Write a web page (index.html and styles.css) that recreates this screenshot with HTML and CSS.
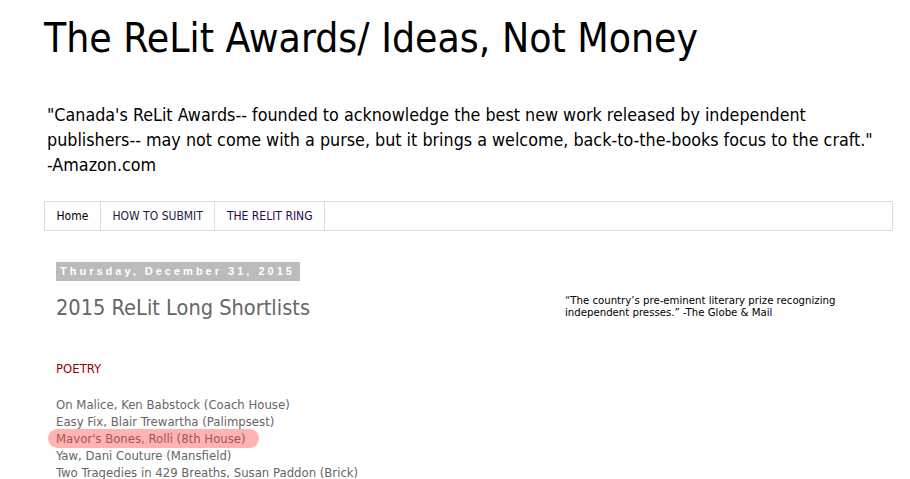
FILE: index.html
```html
<!DOCTYPE html>
<html>
<head>
    <title>The ReLit Awards/ Ideas, Not Money</title>
    <link rel="stylesheet" href="styles.css">
</head>
<body>
    <div class="page">
        <!-- Blog header -->
        <div class="header">
            <h1>The ReLit Awards/ Ideas, Not Money</h1>
            <p class="description">"Canada's ReLit Awards-- founded to acknowledge the best new work released by independent publishers-- may not come with a purse, but it brings a welcome, back-to-the-books focus to the craft."<br>-Amazon.com</p>
        </div>

        <!-- Page tabs -->
        <ul class="tabs">
            <li class="selected"><a href="#">Home</a></li>
            <li><a href="#">HOW TO SUBMIT</a></li>
            <li class="visited"><a href="#">THE RELIT RING</a></li>
        </ul>

        <div class="columns">
            <div class="main">
                <h2 class="date-header"><span>Thursday, December 31, 2015</span></h2>
                <h3 class="post-title">2015 ReLit Long Shortlists</h3>
                <div class="post-body">
                    <p class="category">POETRY</p>
                    <p class="list">
                        On Malice, Ken Babstock (Coach House)<br>
                        Easy Fix, Blair Trewartha (Palimpsest)<br>
                        <span class="marked">Mavor's Bones, Rolli (8th House)</span><br>
                        Yaw, Dani Couture (Mansfield)<br>
                        Two Tragedies in 429 Breaths, Susan Paddon (Brick)
                    </p>
                </div>
            </div>
            <div class="sidebar">
                <p class="blurb">“The country’s pre-eminent literary prize recognizing independent presses.” -The Globe &amp; Mail</p>
            </div>
        </div>
    </div>
</body>
</html>
```

FILE: styles.css
```css
body {
    margin: 0;
    padding: 0;
    background: #fff;
    font-family: "DejaVu Sans Condensed", "Liberation Sans", sans-serif;
    color: #000;
    overflow: hidden;
}

.page {
    padding: 0 17px 0 44px;
}

/* Header */
.header h1 {
    font-size: 40.5px;
    font-weight: normal;
    line-height: 48px;
    margin: 14px 0 0 0;
}

.description {
    font-size: 17.75px;
    line-height: 25px;
    margin: 41px 0 0 3px;
}

/* Tabs */
.tabs {
    list-style: none;
    margin: 23px 0 0 0;
    padding: 0;
    display: flex;
    border: 1px solid #dcdcdc;
    height: 28px;
}

.tabs li {
    border-right: 1px solid #dcdcdc;
    display: flex;
    align-items: center;
}

.tabs a {
    display: block;
    padding: 0 11.5px;
    font-size: 12px;
    color: #1a1a44;
    text-decoration: none;
}

.tabs .selected a {
    color: #000;
}

.tabs .visited a {
    color: #2a0650;
}

/* Two columns */
.columns {
    display: flex;
    padding: 31px 0 0 12px;
}

.main {
    width: 509px;
}

.sidebar {
    flex: 1;
    padding-top: 33px;
}

.date-header {
    margin: 0;
    font-size: 11px;
    line-height: 19px;
    font-family: "Liberation Sans", Arial, sans-serif;
    font-weight: bold;
    letter-spacing: 3px;
}

.date-header span {
    display: inline-block;
    background: #bbbbbb;
    color: #fff;
    padding: 0 5px 0 4px;
}

.post-title {
    margin: 13px 0 0 0;
    font-size: 21.6px;
    font-weight: normal;
    line-height: 28px;
    color: #666;
}

.post-body {
    font-size: 13px;
    color: #666;
    line-height: 17px;
}

.category {
    color: #990000;
    margin: 38px 0 0 0;
}

.list {
    margin: 19px 0 0 0;
}

.marked {
    display: inline-block;
    background: #ffb3b3;
    color: #a35555;
    border-radius: 10px;
    padding: 1px 13px 1px 8px;
    margin: -1px 0 -1px -8px;
}

.blurb {
    margin: 0;
    font-size: 11.3px;
    line-height: 12px;
    color: #000;
    width: 300px;
}
```
